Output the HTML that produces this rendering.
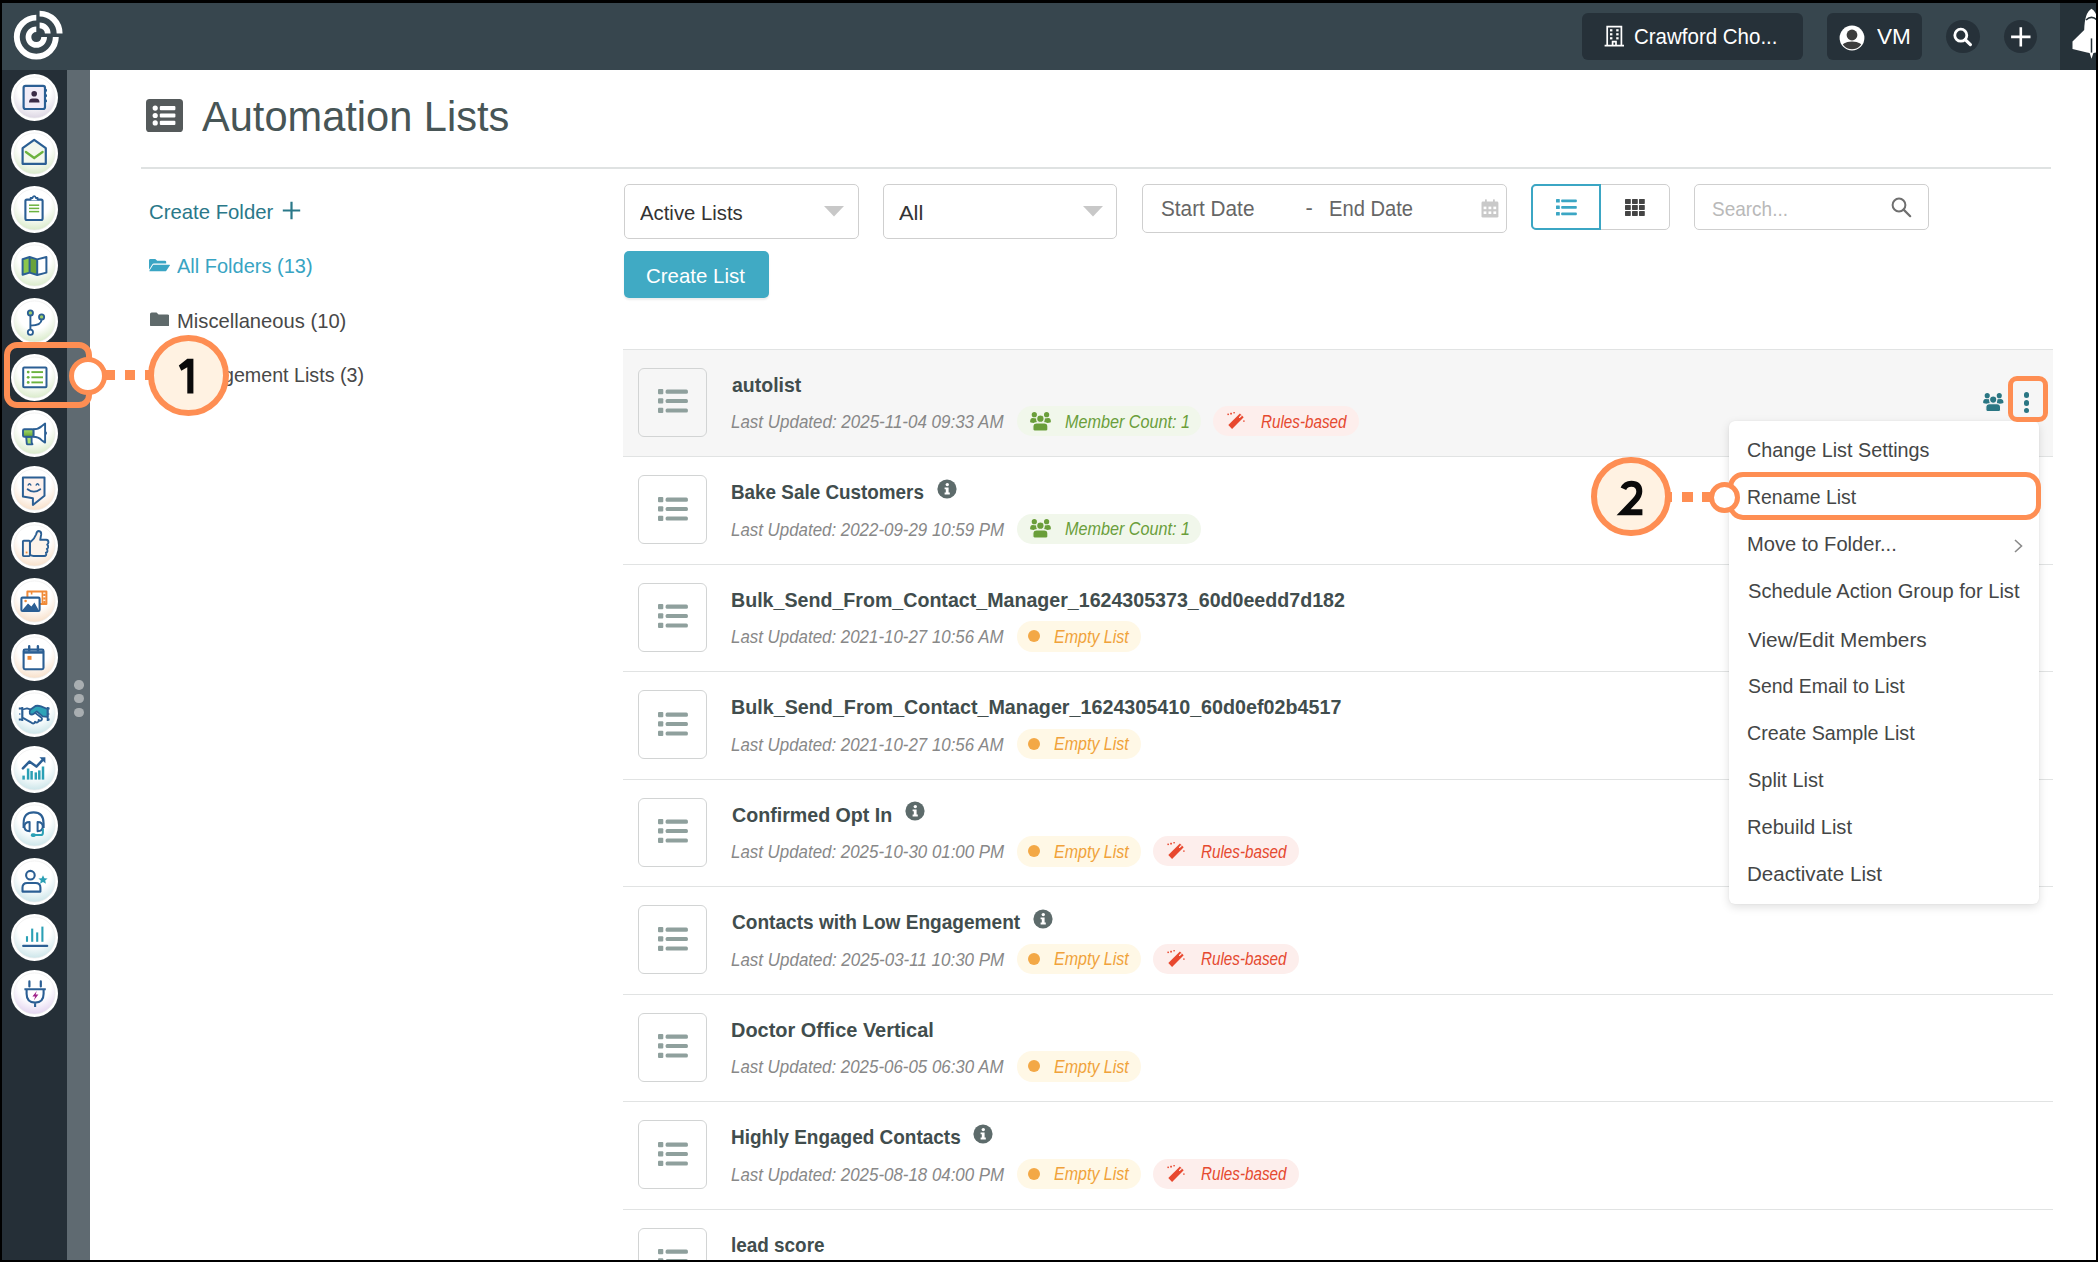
<!DOCTYPE html>
<html><head><meta charset="utf-8"><style>
html,body{margin:0;padding:0;}
body{width:2098px;height:1262px;position:relative;overflow:hidden;background:#fff;font-family:"Liberation Sans",sans-serif;}
.t{position:absolute;white-space:nowrap;transform-origin:0 0;}
#frame{position:absolute;left:0;top:0;width:2098px;height:1262px;box-sizing:border-box;border-style:solid;border-color:#000;border-width:3px 2px 2px 2px;pointer-events:none;}
</style></head><body>
<div style="position:absolute;left:0;top:0;width:2098px;height:70px;background:#37464e"></div>
<div style="position:absolute;left:2060px;top:0;width:38px;height:70px;background:#263239"></div>
<svg style="position:absolute;left:0;top:0" width="80" height="70" viewBox="0 0 80 70">
<g fill="none" stroke="#fff" stroke-width="5.9">
<path d="M 36.3 17.6 A 19.5 19.5 0 1 0 55.8 37.1" />
<path d="M 36.3 29.25 A 7.85 7.85 0 1 0 44.15 37.1" stroke-width="5.7"/>
<path d="M 39.6 13.6 A 20 20 0 0 1 59.6 33.6" />
<path d="M 39.6 25.45 A 8.15 8.15 0 0 1 47.75 33.6" stroke-width="5.7"/>
</g></svg>
<div style="position:absolute;left:1582px;top:12.5px;width:221px;height:47px;background:#263139;border-radius:6px"></div>
<div style="position:absolute;left:1827px;top:12.5px;width:95px;height:47px;background:#263139;border-radius:6px"></div>
<div style="position:absolute;left:1946px;top:19.5px;width:33.5px;height:33.5px;background:#263139;border-radius:50%"></div>
<div style="position:absolute;left:2003.5px;top:19.5px;width:33.5px;height:33.5px;background:#263139;border-radius:50%"></div>
<svg style="position:absolute;left:1604px;top:25px" width="21" height="22" viewBox="0 0 21 22">
<path d="M3.2 20.6 V1.6 H17.4 V20.6 M0.6 20.6 H20 M8.6 20.6 V16.6 H12 V20.6" fill="none" stroke="#fff" stroke-width="1.7"/>
<g fill="#fff"><rect x="6" y="4.2" width="2.4" height="2.2"/><rect x="12.2" y="4.2" width="2.4" height="2.2"/><rect x="6" y="8.2" width="2.4" height="2.2"/><rect x="12.2" y="8.2" width="2.4" height="2.2"/><rect x="6" y="12.2" width="2.4" height="2.2"/><rect x="12.2" y="12.2" width="2.4" height="2.2"/></g></svg>
<svg style="position:absolute;left:1839px;top:25px" width="26" height="26" viewBox="0 0 26 26">
<defs><clipPath id="avc"><circle cx="13" cy="13" r="11.2"/></clipPath></defs>
<circle cx="13" cy="13" r="12.4" fill="#fff"/>
<g clip-path="url(#avc)" fill="#3d3d3d"><circle cx="13" cy="10" r="5.4"/><path d="M1 26 Q2 16.6 13 16.6 Q24 16.6 25 26 Z"/></g></svg>
<svg style="position:absolute;left:1946px;top:19.5px" width="34" height="34" viewBox="0 0 34 34">
<circle cx="14.8" cy="15.2" r="6" fill="none" stroke="#fff" stroke-width="2.8"/>
<path d="M19.2 19.6 L24.4 24.6" stroke="#fff" stroke-width="3.2" stroke-linecap="round"/></svg>
<svg style="position:absolute;left:2003.5px;top:19.5px" width="34" height="34" viewBox="0 0 34 34">
<path d="M16.8 7.2 V26.6 M7.1 16.9 H26.5" stroke="#fff" stroke-width="2.6"/></svg>
<svg style="position:absolute;left:2060px;top:0" width="38" height="70" viewBox="0 0 38 70">
<path d="M31.5 8.7 Q24.6 12.5 24.2 30 L12.5 41.6 V49 L27 52.4 L29.6 53 L31.5 58.7 L33.4 53 L36 52.4 L50.5 49 V41.6 L38.8 30 Q38.4 12.5 31.5 8.7 Z" fill="#fff"/>
<path d="M26 20 Q31.5 14.8 37 20" fill="none" stroke="#263239" stroke-width="1.7"/>
<path d="M31.5 38.4 V52.6" stroke="#263239" stroke-width="1.5"/></svg>
<div style="position:absolute;left:0;top:70px;width:67px;height:1192px;background:#252f37"></div>
<div style="position:absolute;left:67px;top:70px;width:23px;height:1192px;background:#5f6a71"></div>
<div style="position:absolute;left:74px;top:680.3px;width:9.5px;height:9.5px;background:#a9aeb1;border-radius:50%"></div>
<div style="position:absolute;left:74px;top:693.9px;width:9.5px;height:9.5px;background:#a9aeb1;border-radius:50%"></div>
<div style="position:absolute;left:74px;top:707.5px;width:9.5px;height:9.5px;background:#a9aeb1;border-radius:50%"></div>
<svg style="position:absolute;left:11.0px;top:74.0px" width="47" height="47" viewBox="0 0 47 47"><defs><radialGradient id="cg0" cx="50%" cy="30%" r="78%"><stop offset="0" stop-color="#fff"/><stop offset="0.5" stop-color="#fff"/><stop offset="1" stop-color="#d3cbdc"/></radialGradient></defs><circle cx="23.5" cy="23.5" r="23.5" fill="#fff"/><circle cx="23.5" cy="23.5" r="20.6" fill="url(#cg0)" stroke="#ececec" stroke-width="0.7"/><rect x="12.6" y="11.8" width="21.4" height="23.2" rx="2" fill="#f1ecf7" stroke="#2b5f94" stroke-width="2.2"/>
<g fill="#2b5f94"><rect x="34" y="15" width="2" height="2.8" rx="0.8"/><rect x="34" y="20.2" width="2" height="2.8" rx="0.8"/><rect x="34" y="25.4" width="2" height="2.8" rx="0.8"/></g>
<circle cx="23.2" cy="19.8" r="2.8" fill="#3a2c47"/><path d="M18 28.6 Q18 24.4 21.5 24.4 H25 Q28.5 24.4 28.5 28.6 Z" fill="#3a2c47"/></svg>
<svg style="position:absolute;left:11.0px;top:130.0px" width="47" height="47" viewBox="0 0 47 47"><defs><radialGradient id="cg1" cx="50%" cy="30%" r="78%"><stop offset="0" stop-color="#fff"/><stop offset="0.5" stop-color="#fff"/><stop offset="1" stop-color="#d0e6bd"/></radialGradient></defs><circle cx="23.5" cy="23.5" r="23.5" fill="#fff"/><circle cx="23.5" cy="23.5" r="20.6" fill="url(#cg1)" stroke="#ececec" stroke-width="0.7"/><path d="M11.6 33.8 V18.2 L23.2 9.8 L34.8 18.2 V33.8 Z" fill="#f3f8ee" stroke="#2b5f94" stroke-width="2.2" stroke-linejoin="round"/>
<path d="M14.9 22 L23.2 28 L31.6 22" fill="none" stroke="#6cb33f" stroke-width="2.3" stroke-linecap="round"/></svg>
<svg style="position:absolute;left:11.0px;top:186.0px" width="47" height="47" viewBox="0 0 47 47"><defs><radialGradient id="cg2" cx="50%" cy="30%" r="78%"><stop offset="0" stop-color="#fff"/><stop offset="0.5" stop-color="#fff"/><stop offset="1" stop-color="#d0e6bd"/></radialGradient></defs><circle cx="23.5" cy="23.5" r="23.5" fill="#fff"/><circle cx="23.5" cy="23.5" r="20.6" fill="url(#cg2)" stroke="#ececec" stroke-width="0.7"/><rect x="14.4" y="13.6" width="17.2" height="20.4" rx="1.5" fill="#fff" stroke="#2b5f94" stroke-width="2.1"/>
<path d="M19.6 14.2 V12 H21.6 Q21.8 10.2 23.2 10.2 Q24.6 10.2 24.8 12 H26.6 V14.2" fill="#fff" stroke="#2b5f94" stroke-width="1.8" stroke-linejoin="round"/>
<g stroke="#6cb33f" stroke-width="1.5"><path d="M18 19.2 H28.2"/><path d="M18 22.4 H28.2"/><path d="M18 25.6 H28.2"/></g></svg>
<svg style="position:absolute;left:11.0px;top:242.0px" width="47" height="47" viewBox="0 0 47 47"><defs><radialGradient id="cg3" cx="50%" cy="30%" r="78%"><stop offset="0" stop-color="#fff"/><stop offset="0.5" stop-color="#fff"/><stop offset="1" stop-color="#d0e6bd"/></radialGradient></defs><circle cx="23.5" cy="23.5" r="23.5" fill="#fff"/><circle cx="23.5" cy="23.5" r="20.6" fill="url(#cg3)" stroke="#ececec" stroke-width="0.7"/><path d="M11.6 17.2 L18.6 15 V30.6 L11.6 32.8 Z" fill="#8cc64c"/>
<path d="M18.6 15 L26.2 17.4 V33 L18.6 30.6 Z" fill="#6aa23a"/>
<path d="M26.2 17.4 L35.4 15 V30.6 L26.2 33 Z" fill="#fff"/>
<path d="M11.6 17.2 L18.6 15 L26.2 17.4 L35.4 15 V30.6 L26.2 33 L18.6 30.6 L11.6 32.8 Z M18.6 15 V30.6 M26.2 17.4 V33" fill="none" stroke="#2b5f94" stroke-width="2" stroke-linejoin="round"/></svg>
<svg style="position:absolute;left:11.0px;top:298.0px" width="47" height="47" viewBox="0 0 47 47"><defs><radialGradient id="cg4" cx="50%" cy="30%" r="78%"><stop offset="0" stop-color="#fff"/><stop offset="0.5" stop-color="#fff"/><stop offset="1" stop-color="#d0e6bd"/></radialGradient></defs><circle cx="23.5" cy="23.5" r="23.5" fill="#fff"/><circle cx="23.5" cy="23.5" r="20.6" fill="url(#cg4)" stroke="#ececec" stroke-width="0.7"/><path d="M19.4 17.4 V31.8 M30.6 21.4 Q30.6 27.2 19.4 27.6" fill="none" stroke="#2b5f94" stroke-width="1.9"/>
<circle cx="19.4" cy="14.9" r="2.6" fill="#9ccc6a" stroke="#2b5f94" stroke-width="1.8"/>
<circle cx="30.6" cy="18.9" r="2.6" fill="#9ccc6a" stroke="#2b5f94" stroke-width="1.8"/>
<circle cx="19.4" cy="34.3" r="2.6" fill="#fff" stroke="#2b5f94" stroke-width="1.8"/></svg>
<svg style="position:absolute;left:11.0px;top:354.0px" width="47" height="47" viewBox="0 0 47 47"><defs><radialGradient id="cg5" cx="50%" cy="30%" r="78%"><stop offset="0" stop-color="#fff"/><stop offset="0.5" stop-color="#fff"/><stop offset="1" stop-color="#d0e6bd"/></radialGradient></defs><circle cx="23.5" cy="23.5" r="23.5" fill="#fff"/><circle cx="23.5" cy="23.5" r="20.6" fill="url(#cg5)" stroke="#ececec" stroke-width="0.7"/><rect x="12.2" y="13.6" width="23.3" height="19.7" rx="1" fill="#fff" stroke="#2b5f94" stroke-width="2"/>
<g fill="#6cb33f"><circle cx="17.2" cy="18.1" r="1.4"/><circle cx="17.2" cy="23.3" r="1.4"/><circle cx="17.2" cy="28.4" r="1.4"/></g>
<g stroke="#6cb33f" stroke-width="1.9"><path d="M20.4 18.1 H32"/><path d="M20.4 23.3 H32"/><path d="M20.4 28.4 H32"/></g></svg>
<svg style="position:absolute;left:11.0px;top:410.0px" width="47" height="47" viewBox="0 0 47 47"><defs><radialGradient id="cg6" cx="50%" cy="30%" r="78%"><stop offset="0" stop-color="#fff"/><stop offset="0.5" stop-color="#fff"/><stop offset="1" stop-color="#d0e6bd"/></radialGradient></defs><circle cx="23.5" cy="23.5" r="23.5" fill="#fff"/><circle cx="23.5" cy="23.5" r="20.6" fill="url(#cg6)" stroke="#ececec" stroke-width="0.7"/><defs><linearGradient id="megag" x1="0" y1="0" x2="0" y2="1"><stop offset="0" stop-color="#a9df6c"/><stop offset="1" stop-color="#64a032"/></linearGradient></defs>
<path d="M15.2 26.8 L15.8 33.6 Q15.9 34.4 16.7 34.4 H21.2 Q21.8 34.4 21.3 33.7 L20.6 32.6 V26.8 Z" fill="#a8e070" stroke="#2b5f94" stroke-width="1.9" stroke-linejoin="round"/>
<path d="M22.4 19.2 Q27.4 19.2 30.6 16.2 L34.1 13.6 V32.6 L30.6 30.2 Q27.4 26.8 22.4 26.8 Z" fill="#fff" stroke="#2b5f94" stroke-width="1.9" stroke-linejoin="round"/>
<rect x="12" y="19.2" width="10.4" height="7.6" rx="1.4" fill="url(#megag)" stroke="#2b5f94" stroke-width="1.9"/>
<path d="M34.6 21.6 Q36.2 23.1 34.6 24.6 Z" fill="#2b5f94" stroke="#2b5f94" stroke-width="1.2"/></svg>
<svg style="position:absolute;left:11.0px;top:466.0px" width="47" height="47" viewBox="0 0 47 47"><defs><radialGradient id="cg7" cx="50%" cy="30%" r="78%"><stop offset="0" stop-color="#fff"/><stop offset="0.5" stop-color="#fff"/><stop offset="1" stop-color="#f6d8bc"/></radialGradient></defs><circle cx="23.5" cy="23.5" r="23.5" fill="#fff"/><circle cx="23.5" cy="23.5" r="20.6" fill="url(#cg7)" stroke="#ececec" stroke-width="0.7"/><path d="M11.9 11.6 H33.5 V29.8 L21.9 39 V32.3 L11.9 30.6 Z" fill="#fdf1ec" stroke="#2b5f94" stroke-width="2" stroke-linejoin="round"/>
<path d="M17.2 19 Q18.5 16.6 19.8 19 M25.2 19 Q26.5 16.6 27.8 19" fill="none" stroke="#2b5f94" stroke-width="1.5" stroke-linecap="round"/>
<path d="M16.6 23.2 Q22.9 28 29.3 23.2" fill="none" stroke="#2b5f94" stroke-width="1.8" stroke-linecap="round"/></svg>
<svg style="position:absolute;left:11.0px;top:522.0px" width="47" height="47" viewBox="0 0 47 47"><defs><radialGradient id="cg8" cx="50%" cy="30%" r="78%"><stop offset="0" stop-color="#fff"/><stop offset="0.5" stop-color="#fff"/><stop offset="1" stop-color="#f6d8bc"/></radialGradient></defs><circle cx="23.5" cy="23.5" r="23.5" fill="#fff"/><circle cx="23.5" cy="23.5" r="20.6" fill="url(#cg8)" stroke="#ececec" stroke-width="0.7"/><path d="M19 20.5 Q23.5 17 25.2 12.2 Q25.8 9 27.8 9 Q30.4 9.2 30.2 12.4 L29.2 17.8 H35.2 Q37.6 18 37.4 20.6 Q37.2 22 36.2 22.6 Q37.4 23.4 37.1 25.2 Q36.8 26.6 35.8 26.9 Q36.8 27.8 36.4 29.4 Q36 30.6 34.9 30.8 Q35.6 31.8 35.1 33 Q34.6 34 33.2 34 H22.6 Q20.6 34 19 32.8 Z" fill="#fdf3ea" stroke="#2b5f94" stroke-width="1.9" stroke-linejoin="round"/>
<rect x="11.9" y="18.8" width="7" height="15.3" rx="0.8" fill="#fdf3ea" stroke="#2b5f94" stroke-width="1.9"/>
<rect x="14.7" y="29.6" width="1.8" height="1.8" fill="#f08a38"/></svg>
<svg style="position:absolute;left:11.0px;top:578.0px" width="47" height="47" viewBox="0 0 47 47"><defs><radialGradient id="cg9" cx="50%" cy="30%" r="78%"><stop offset="0" stop-color="#fff"/><stop offset="0.5" stop-color="#fff"/><stop offset="1" stop-color="#f6d8bc"/></radialGradient></defs><circle cx="23.5" cy="23.5" r="23.5" fill="#fff"/><circle cx="23.5" cy="23.5" r="20.6" fill="url(#cg9)" stroke="#ececec" stroke-width="0.7"/><path d="M16.4 19 V13.6 H35.4 V26 H29" fill="#fff" stroke="#f08a38" stroke-width="2" stroke-linejoin="round"/>
<path d="M20.6 13.6 V16.4 M31.4 13.6 V26" stroke="#f08a38" stroke-width="1.6"/>
<g fill="#f08a38"><rect x="32.2" y="15.8" width="2.4" height="2.2"/><rect x="32.2" y="19.4" width="2.4" height="2.2"/><rect x="32.2" y="22.8" width="2.4" height="2.2"/></g>
<rect x="10.4" y="19.6" width="18.2" height="13.4" rx="1.2" fill="#fff" stroke="#2b5f94" stroke-width="2.1"/>
<path d="M11.4 32 L17 25.4 L20.4 28.6 L23.4 24.4 L27.6 32 Z" fill="#2b5f94"/>
<circle cx="14.6" cy="23" r="1.3" fill="#f08a38"/></svg>
<svg style="position:absolute;left:11.0px;top:634.0px" width="47" height="47" viewBox="0 0 47 47"><defs><radialGradient id="cg10" cx="50%" cy="30%" r="78%"><stop offset="0" stop-color="#fff"/><stop offset="0.5" stop-color="#fff"/><stop offset="1" stop-color="#f6d8bc"/></radialGradient></defs><circle cx="23.5" cy="23.5" r="23.5" fill="#fff"/><circle cx="23.5" cy="23.5" r="20.6" fill="url(#cg10)" stroke="#ececec" stroke-width="0.7"/><rect x="12.6" y="15.6" width="19.9" height="19.6" rx="1.4" fill="#fff" stroke="#2b5f94" stroke-width="2.1"/>
<path d="M12.6 18.4 H32.5" stroke="#2b5f94" stroke-width="2.6"/>
<path d="M18.2 12.2 V16.4 M26.9 12.2 V16.4" stroke="#2b5f94" stroke-width="2.4" stroke-linecap="round"/>
<rect x="16.5" y="21.9" width="4" height="3.9" fill="#f08a38"/></svg>
<svg style="position:absolute;left:11.0px;top:690.0px" width="47" height="47" viewBox="0 0 47 47"><defs><radialGradient id="cg11" cx="50%" cy="30%" r="78%"><stop offset="0" stop-color="#fff"/><stop offset="0.5" stop-color="#fff"/><stop offset="1" stop-color="#bfdfe4"/></radialGradient></defs><circle cx="23.5" cy="23.5" r="23.5" fill="#fff"/><circle cx="23.5" cy="23.5" r="20.6" fill="url(#cg11)" stroke="#ececec" stroke-width="0.7"/><path d="M7.8 18.5 H11.3 M7.8 29.5 H11.3 M11.3 17 V31 M38.6 18.5 H36.7 M38.6 29.5 H36.7 M36.7 17 V31" stroke="#2b5f94" stroke-width="1.9" fill="none"/>
<circle cx="8.8" cy="24" r="0.8" fill="#2b5f94"/><circle cx="37.8" cy="24" r="0.8" fill="#2b5f94"/>
<path d="M11.5 19.5 L16 18.3 L20 19.6 L30.5 27.8 Q31.6 29.4 30.2 30.4 Q28.8 31.2 27.6 30 Q28 31.8 26.4 32.4 Q25 32.8 24 31.6 Q23.8 33.4 22.2 33.5 Q21 33.5 20 32.4 L11.5 27.6 Z" fill="#fff" stroke="#2b5f94" stroke-width="1.8" stroke-linejoin="round"/>
<path d="M36.5 19 L30 16.4 Q27 15.4 24.5 16 L19.6 19.6 Q17.8 21.6 18.8 23.6 Q20.4 25.4 22.8 23.8 L25.8 21.4 L31.6 26.4 L36.5 26.8 Z" fill="#2ea3b8" stroke="#2b5f94" stroke-width="1.8" stroke-linejoin="round"/></svg>
<svg style="position:absolute;left:11.0px;top:746.0px" width="47" height="47" viewBox="0 0 47 47"><defs><radialGradient id="cg12" cx="50%" cy="30%" r="78%"><stop offset="0" stop-color="#fff"/><stop offset="0.5" stop-color="#fff"/><stop offset="1" stop-color="#bfdfe4"/></radialGradient></defs><circle cx="23.5" cy="23.5" r="23.5" fill="#fff"/><circle cx="23.5" cy="23.5" r="20.6" fill="url(#cg12)" stroke="#ececec" stroke-width="0.7"/><g stroke="#2ba0b5" stroke-width="2.5"><path d="M12.6 33.6 V29.6"/><path d="M17.1 33.6 V22.5"/><path d="M20.6 33.6 V25"/><path d="M24.8 33.6 V26.4"/><path d="M28.3 33.6 V24.4"/><path d="M32 33.6 V20.5"/></g>
<path d="M11.9 22.4 L18.4 15.6 L25.4 20.6 L32.2 13.4" fill="none" stroke="#2b5f94" stroke-width="2.5" stroke-linejoin="round" stroke-linecap="round"/>
<path d="M28.4 11.2 H34.4 V17.2 Z" fill="#2b5f94"/></svg>
<svg style="position:absolute;left:11.0px;top:802.0px" width="47" height="47" viewBox="0 0 47 47"><defs><radialGradient id="cg13" cx="50%" cy="30%" r="78%"><stop offset="0" stop-color="#fff"/><stop offset="0.5" stop-color="#fff"/><stop offset="1" stop-color="#bfdfe4"/></radialGradient></defs><circle cx="23.5" cy="23.5" r="23.5" fill="#fff"/><circle cx="23.5" cy="23.5" r="20.6" fill="url(#cg13)" stroke="#ececec" stroke-width="0.7"/><path d="M12.6 26 V21.4 Q12.6 10.4 22.6 10.4 Q32.6 10.4 32.6 21.4 V26" fill="none" stroke="#2b5f94" stroke-width="2.1"/>
<path d="M18.6 20 Q13.4 20 13.4 24.6 Q13.4 29.2 18.6 29.2 Z" fill="#fff" stroke="#2b5f94" stroke-width="2" stroke-linejoin="round"/>
<path d="M26.6 20 Q31.8 20 31.8 24.6 Q31.8 29.2 26.6 29.2 Z" fill="#fff" stroke="#2b5f94" stroke-width="2" stroke-linejoin="round"/>
<path d="M31.9 26.8 V31 Q31.9 33.1 29.8 33.1 H23" fill="none" stroke="#2ba0b5" stroke-width="2"/>
<rect x="19.8" y="31.2" width="5" height="3.8" rx="1.8" fill="#2ba0b5"/></svg>
<svg style="position:absolute;left:11.0px;top:858.0px" width="47" height="47" viewBox="0 0 47 47"><defs><radialGradient id="cg14" cx="50%" cy="30%" r="78%"><stop offset="0" stop-color="#fff"/><stop offset="0.5" stop-color="#fff"/><stop offset="1" stop-color="#bfdfe4"/></radialGradient></defs><circle cx="23.5" cy="23.5" r="23.5" fill="#fff"/><circle cx="23.5" cy="23.5" r="20.6" fill="url(#cg14)" stroke="#ececec" stroke-width="0.7"/><circle cx="19.4" cy="17.2" r="4.3" fill="#fff" stroke="#2b5f94" stroke-width="2.1"/>
<path d="M11.5 33.6 V29.6 Q11.5 25 16.2 25 H24.6 Q29.4 25 29.4 29.6 V33.6 Z" fill="#fff" stroke="#2b5f94" stroke-width="2.1" stroke-linejoin="round"/>
<path d="M32 17.2 L33.4 20.2 L36.6 20.5 L34.2 22.6 L34.9 25.8 L32 24.1 L29.1 25.8 L29.8 22.6 L27.4 20.5 L30.6 20.2 Z" fill="#2ba0b5"/></svg>
<svg style="position:absolute;left:11.0px;top:914.0px" width="47" height="47" viewBox="0 0 47 47"><defs><radialGradient id="cg15" cx="50%" cy="30%" r="78%"><stop offset="0" stop-color="#fff"/><stop offset="0.5" stop-color="#fff"/><stop offset="1" stop-color="#bfdfe4"/></radialGradient></defs><circle cx="23.5" cy="23.5" r="23.5" fill="#fff"/><circle cx="23.5" cy="23.5" r="20.6" fill="url(#cg15)" stroke="#ececec" stroke-width="0.7"/><g stroke="#2ba0b5" stroke-width="2.1"><path d="M16 27.8 V22.2"/><path d="M21.2 27.8 V14.6"/><path d="M26.2 27.8 V18.4"/><path d="M31.4 27.8 V12.6"/></g>
<path d="M12.2 31.9 H36.2" stroke="#2b5f94" stroke-width="2.2" stroke-linecap="round"/></svg>
<svg style="position:absolute;left:11.0px;top:970.0px" width="47" height="47" viewBox="0 0 47 47"><defs><radialGradient id="cg16" cx="50%" cy="30%" r="78%"><stop offset="0" stop-color="#fff"/><stop offset="0.5" stop-color="#fff"/><stop offset="1" stop-color="#dccaec"/></radialGradient></defs><circle cx="23.5" cy="23.5" r="23.5" fill="#fff"/><circle cx="23.5" cy="23.5" r="20.6" fill="url(#cg16)" stroke="#ececec" stroke-width="0.7"/><path d="M18.4 11.4 V16.4 M29.8 11.4 V16.4" stroke="#2b5f94" stroke-width="2.2" stroke-linecap="round"/>
<path d="M13.4 19.2 H34.8 M15.6 19.2 V23.8 Q15.6 32.6 24.1 32.6 Q32.6 32.6 32.6 23.8 V19.2 M24.1 32.6 V37" fill="none" stroke="#2b5f94" stroke-width="2.1"/>
<path d="M25.8 21 L21.4 26.4 H24.2 L22.8 30.4 L27.4 24.6 H24.6 Z" fill="#a0228a"/></svg>
<svg style="position:absolute;left:145.5px;top:98.6px" width="37" height="33" viewBox="0 0 37 33">
<rect x="0" y="0" width="37" height="33" rx="3.6" fill="#555a5b"/>
<g fill="#fff"><circle cx="9.2" cy="9.1" r="2.6"/><circle cx="9.2" cy="16.5" r="2.6"/><circle cx="9.2" cy="23.9" r="2.6"/>
<rect x="13.8" y="7" width="15.6" height="4.2" rx="1"/><rect x="13.8" y="14.4" width="15.6" height="4.2" rx="1"/><rect x="13.8" y="21.8" width="15.6" height="4.2" rx="1"/></g></svg>
<div style="position:absolute;left:140.7px;top:167px;width:1910px;height:1.5px;background:#dfe2e2"></div>
<svg style="position:absolute;left:282px;top:201px" width="19" height="19" viewBox="0 0 19 19"><path d="M9.5 0.8 V18.2 M0.8 9.5 H18.2" stroke="#2a7889" stroke-width="2.2"/></svg>
<svg style="position:absolute;left:149.4px;top:258.2px" width="21" height="13.5" viewBox="0 0 22 17.4" preserveAspectRatio="none">
<path d="M0 3 Q0 1.4 1.6 1.4 H6.6 L8.6 3.4 H16.6 Q18 3.4 18 4.8 V7.2 H5.2 Q4 7.2 3.4 8.4 L0 15 Z" fill="#3aa5c4"/>
<path d="M4.4 8.8 H21.4 Q22.4 8.8 21.8 9.8 L18 16.6 Q17.6 17.2 16.8 17.2 H0.8 Q0 17.2 0.4 16.4 Z" fill="#3aa5c4"/></svg>
<svg style="position:absolute;left:149.9px;top:312px" width="19.2" height="14.3" viewBox="0 0 20.6 16.6" preserveAspectRatio="none">
<path d="M0 2.4 Q0 0.6 1.8 0.6 H7 L9.2 2.8 H18.8 Q20.6 2.8 20.6 4.6 V15 Q20.6 16.6 18.8 16.6 H1.8 Q0 16.6 0 15 Z" fill="#5f6a6b"/></svg>
<div style="position:absolute;left:623.6px;top:183.6px;width:235px;height:55px;box-sizing:border-box;border:1.5px solid #cfcfcf;border-radius:5px;background:#fff"></div>
<div style="position:absolute;left:883.4px;top:183.6px;width:234px;height:55px;box-sizing:border-box;border:1.5px solid #cfcfcf;border-radius:5px;background:#fff"></div>
<svg style="position:absolute;left:824px;top:206px" width="20" height="11"><path d="M0 0 H20 L10 10.5 Z" fill="#c8c8c8"/></svg>
<svg style="position:absolute;left:1083px;top:206px" width="20" height="11"><path d="M0 0 H20 L10 10.5 Z" fill="#c8c8c8"/></svg>
<div style="position:absolute;left:623.6px;top:251px;width:145.4px;height:46.6px;background:#40aac4;border-radius:5px;box-shadow:0 2px 2px rgba(0,0,0,0.08)"></div>
<div style="position:absolute;left:1142.4px;top:183.5px;width:364.5px;height:49px;box-sizing:border-box;border:1.5px solid #cfcfcf;border-radius:5px;background:#fff"></div>
<div style="position:absolute;left:1530.9px;top:183.5px;width:139px;height:46.5px;box-sizing:border-box;border:1.5px solid #cfcfcf;border-radius:5px;background:#fff"></div>
<div style="position:absolute;left:1530.9px;top:183.5px;width:70.5px;height:46.5px;box-sizing:border-box;border:2px solid #3ba6c4;border-radius:5px 0 0 5px"></div>
<svg style="position:absolute;left:1480.5px;top:198.5px" width="18" height="19" viewBox="0 0 18 19">
<path d="M0.5 4 Q0.5 2.6 1.9 2.6 H16 Q17.4 2.6 17.4 4 V17.2 Q17.4 18.6 16 18.6 H1.9 Q0.5 18.6 0.5 17.2 Z" fill="#c9c9c9"/>
<rect x="4" y="0.4" width="1.8" height="3.6" fill="#c9c9c9"/><rect x="12" y="0.4" width="1.8" height="3.6" fill="#c9c9c9"/>
<g fill="#fff"><rect x="2.6" y="7.6" width="2.8" height="2.6"/><rect x="7.5" y="7.6" width="2.8" height="2.6"/><rect x="12.4" y="7.6" width="2.8" height="2.6"/>
<rect x="2.6" y="12.4" width="2.8" height="2.6"/><rect x="7.5" y="12.4" width="2.8" height="2.6"/><rect x="12.4" y="12.4" width="2.8" height="2.6"/></g></svg>
<svg style="position:absolute;left:1555.5px;top:199px" width="21" height="17" viewBox="0 0 21 17">
<g fill="#3ba6c4"><rect x="0" y="0" width="3.8" height="3.6" rx="0.6"/><rect x="0" y="6.5" width="3.8" height="3.6" rx="0.6"/><rect x="0" y="13" width="3.8" height="3.6" rx="0.6"/>
<rect x="5.2" y="0.4" width="15.6" height="2.8" rx="0.8"/><rect x="5.2" y="6.9" width="15.6" height="2.8" rx="0.8"/><rect x="5.2" y="13.4" width="15.6" height="2.8" rx="0.8"/></g></svg>
<svg style="position:absolute;left:1625px;top:199px" width="20" height="17" viewBox="0 0 20 17">
<g fill="#444"><rect x="0" y="0" width="5.8" height="4.9" rx="0.6"/><rect x="7" y="0" width="5.8" height="4.9" rx="0.6"/><rect x="14" y="0" width="5.8" height="4.9" rx="0.6"/>
<rect x="0" y="6" width="5.8" height="4.9" rx="0.6"/><rect x="7" y="6" width="5.8" height="4.9" rx="0.6"/><rect x="14" y="6" width="5.8" height="4.9" rx="0.6"/>
<rect x="0" y="12" width="5.8" height="4.9" rx="0.6"/><rect x="7" y="12" width="5.8" height="4.9" rx="0.6"/><rect x="14" y="12" width="5.8" height="4.9" rx="0.6"/></g></svg>
<div style="position:absolute;left:1693.8px;top:183.5px;width:235.2px;height:46.5px;box-sizing:border-box;border:1.5px solid #cfcfcf;border-radius:5px;background:#fff"></div>
<svg style="position:absolute;left:1891px;top:197px" width="21" height="21" viewBox="0 0 21 21">
<circle cx="8" cy="8" r="6.4" fill="none" stroke="#6f6f6f" stroke-width="2"/><path d="M12.6 12.6 L19.2 19.2" stroke="#6f6f6f" stroke-width="2.2" stroke-linecap="round"/></svg>
<div style="position:absolute;left:623.4px;top:349px;width:1429.4px;height:107.5px;background:#f6f6f6"></div>
<div style="position:absolute;left:623px;top:348.6px;width:1430px;height:1.2px;background:#e1e3e3"></div>
<div style="position:absolute;left:638.3px;top:367.5px;width:69px;height:69px;box-sizing:border-box;border:1.8px solid #d2d4d4;border-radius:6px"></div>
<svg style="position:absolute;left:657.8px;top:389.3px" width="30" height="25" viewBox="0 0 30 25"><g fill="#8fa09d"><rect x="0" y="0" width="5.3" height="5.3" rx="1"/><rect x="0" y="9.3" width="5.3" height="5.3" rx="1"/><rect x="0" y="18.8" width="5.3" height="5.3" rx="1"/><rect x="7.6" y="0.6" width="22.3" height="4.1" rx="1.5"/><rect x="7.6" y="9.9" width="22.3" height="4.1" rx="1.5"/><rect x="7.6" y="19.4" width="22.3" height="4.1" rx="1.5"/></g></svg>
<div style="position:absolute;left:1017.0px;top:406.0px;width:184px;height:30.3px;border-radius:15.2px;background:#f1f7eb"></div>
<svg style="position:absolute;left:1030.0px;top:411.6px" width="21.0" height="20.0" viewBox="0 0 21 20"><g fill="#6a9e3a"><circle cx="4.3" cy="2.7" r="2.6"/><circle cx="16.6" cy="2.7" r="2.6"/><path d="M0.2 10.2 Q-0.2 6.4 2.6 6 L6.4 6.4 L6.8 10.6 Q3 11.4 0.2 10.2 Z"/><path d="M20.8 10.2 Q21.2 6.4 18.4 6 L14.6 6.4 L14.2 10.6 Q18 11.4 20.8 10.2 Z"/><path d="M2.9 17.2 V14.4 Q2.9 10.9 6.6 10.9 H14.2 Q17.9 10.9 17.9 14.4 V17.2 Q17.9 19 16.1 19 H4.7 Q2.9 19 2.9 17.2 Z" stroke="#f1f7eb" stroke-width="1.1"/><circle cx="10.4" cy="6.7" r="3.7" stroke="#f1f7eb" stroke-width="1.1"/></g></svg>
<div style="position:absolute;left:1213.0px;top:406.0px;width:145.8px;height:30.3px;border-radius:15.2px;background:#fdeeec"></div>
<svg style="position:absolute;left:1227.0px;top:412.2px" width="19" height="19" viewBox="0 0 19 19"><g fill="#e8482f"><path d="M1.3 13.1 L12.9 1.5 L16.7 5.3 L5.1 16.9 Z"/><rect x="0.4" y="1.6" width="1.5" height="1.5"/><rect x="3.2" y="0.8" width="1.7" height="1.7"/><rect x="6.4" y="0" width="1.4" height="1.4"/><rect x="16.2" y="8.4" width="1.4" height="1.4"/></g><path d="M12.6 5.4 L14.2 3.8" stroke="#fdeeec" stroke-width="1.3" stroke-linecap="round"/></svg>
<div style="position:absolute;left:623px;top:456.1px;width:1430px;height:1.2px;background:#e1e3e3"></div>
<div style="position:absolute;left:638.3px;top:475.0px;width:69px;height:69px;box-sizing:border-box;border:1.8px solid #d2d4d4;border-radius:6px"></div>
<svg style="position:absolute;left:657.8px;top:496.8px" width="30" height="25" viewBox="0 0 30 25"><g fill="#8fa09d"><rect x="0" y="0" width="5.3" height="5.3" rx="1"/><rect x="0" y="9.3" width="5.3" height="5.3" rx="1"/><rect x="0" y="18.8" width="5.3" height="5.3" rx="1"/><rect x="7.6" y="0.6" width="22.3" height="4.1" rx="1.5"/><rect x="7.6" y="9.9" width="22.3" height="4.1" rx="1.5"/><rect x="7.6" y="19.4" width="22.3" height="4.1" rx="1.5"/></g></svg>
<svg style="position:absolute;left:936.6px;top:478.5px" width="20" height="20" viewBox="0 0 20 20"><circle cx="10" cy="10" r="9.6" fill="#5d6b6b"/><g fill="#fff"><circle cx="10.3" cy="5.6" r="1.7"/><path d="M7.6 8.4 H11.6 V13.6 H12.8 V15.4 H7.6 V13.6 H8.8 V10.2 H7.6 Z"/></g></svg>
<div style="position:absolute;left:1017.0px;top:513.5px;width:184px;height:30.3px;border-radius:15.2px;background:#f1f7eb"></div>
<svg style="position:absolute;left:1030.0px;top:519.1px" width="21.0" height="20.0" viewBox="0 0 21 20"><g fill="#6a9e3a"><circle cx="4.3" cy="2.7" r="2.6"/><circle cx="16.6" cy="2.7" r="2.6"/><path d="M0.2 10.2 Q-0.2 6.4 2.6 6 L6.4 6.4 L6.8 10.6 Q3 11.4 0.2 10.2 Z"/><path d="M20.8 10.2 Q21.2 6.4 18.4 6 L14.6 6.4 L14.2 10.6 Q18 11.4 20.8 10.2 Z"/><path d="M2.9 17.2 V14.4 Q2.9 10.9 6.6 10.9 H14.2 Q17.9 10.9 17.9 14.4 V17.2 Q17.9 19 16.1 19 H4.7 Q2.9 19 2.9 17.2 Z" stroke="#f1f7eb" stroke-width="1.1"/><circle cx="10.4" cy="6.7" r="3.7" stroke="#f1f7eb" stroke-width="1.1"/></g></svg>
<div style="position:absolute;left:623px;top:563.6px;width:1430px;height:1.2px;background:#e1e3e3"></div>
<div style="position:absolute;left:638.3px;top:582.5px;width:69px;height:69px;box-sizing:border-box;border:1.8px solid #d2d4d4;border-radius:6px"></div>
<svg style="position:absolute;left:657.8px;top:604.3px" width="30" height="25" viewBox="0 0 30 25"><g fill="#8fa09d"><rect x="0" y="0" width="5.3" height="5.3" rx="1"/><rect x="0" y="9.3" width="5.3" height="5.3" rx="1"/><rect x="0" y="18.8" width="5.3" height="5.3" rx="1"/><rect x="7.6" y="0.6" width="22.3" height="4.1" rx="1.5"/><rect x="7.6" y="9.9" width="22.3" height="4.1" rx="1.5"/><rect x="7.6" y="19.4" width="22.3" height="4.1" rx="1.5"/></g></svg>
<div style="position:absolute;left:1016.8px;top:621.0px;width:124.5px;height:30.6px;border-radius:15.3px;background:#fff8e6"></div>
<div style="position:absolute;left:1027.7px;top:630.2px;width:12px;height:12px;border-radius:50%;background:#f3a846"></div>
<div style="position:absolute;left:623px;top:671.1px;width:1430px;height:1.2px;background:#e1e3e3"></div>
<div style="position:absolute;left:638.3px;top:690.0px;width:69px;height:69px;box-sizing:border-box;border:1.8px solid #d2d4d4;border-radius:6px"></div>
<svg style="position:absolute;left:657.8px;top:711.8px" width="30" height="25" viewBox="0 0 30 25"><g fill="#8fa09d"><rect x="0" y="0" width="5.3" height="5.3" rx="1"/><rect x="0" y="9.3" width="5.3" height="5.3" rx="1"/><rect x="0" y="18.8" width="5.3" height="5.3" rx="1"/><rect x="7.6" y="0.6" width="22.3" height="4.1" rx="1.5"/><rect x="7.6" y="9.9" width="22.3" height="4.1" rx="1.5"/><rect x="7.6" y="19.4" width="22.3" height="4.1" rx="1.5"/></g></svg>
<div style="position:absolute;left:1016.8px;top:728.5px;width:124.5px;height:30.6px;border-radius:15.3px;background:#fff8e6"></div>
<div style="position:absolute;left:1027.7px;top:737.7px;width:12px;height:12px;border-radius:50%;background:#f3a846"></div>
<div style="position:absolute;left:623px;top:778.6px;width:1430px;height:1.2px;background:#e1e3e3"></div>
<div style="position:absolute;left:638.3px;top:797.5px;width:69px;height:69px;box-sizing:border-box;border:1.8px solid #d2d4d4;border-radius:6px"></div>
<svg style="position:absolute;left:657.8px;top:819.3px" width="30" height="25" viewBox="0 0 30 25"><g fill="#8fa09d"><rect x="0" y="0" width="5.3" height="5.3" rx="1"/><rect x="0" y="9.3" width="5.3" height="5.3" rx="1"/><rect x="0" y="18.8" width="5.3" height="5.3" rx="1"/><rect x="7.6" y="0.6" width="22.3" height="4.1" rx="1.5"/><rect x="7.6" y="9.9" width="22.3" height="4.1" rx="1.5"/><rect x="7.6" y="19.4" width="22.3" height="4.1" rx="1.5"/></g></svg>
<svg style="position:absolute;left:904.7px;top:801.0px" width="20" height="20" viewBox="0 0 20 20"><circle cx="10" cy="10" r="9.6" fill="#5d6b6b"/><g fill="#fff"><circle cx="10.3" cy="5.6" r="1.7"/><path d="M7.6 8.4 H11.6 V13.6 H12.8 V15.4 H7.6 V13.6 H8.8 V10.2 H7.6 Z"/></g></svg>
<div style="position:absolute;left:1016.8px;top:836.0px;width:124.5px;height:30.6px;border-radius:15.3px;background:#fff8e6"></div>
<div style="position:absolute;left:1027.7px;top:845.2px;width:12px;height:12px;border-radius:50%;background:#f3a846"></div>
<div style="position:absolute;left:1153.3px;top:836.0px;width:145.8px;height:30.3px;border-radius:15.2px;background:#fdeeec"></div>
<svg style="position:absolute;left:1167.3px;top:842.2px" width="19" height="19" viewBox="0 0 19 19"><g fill="#e8482f"><path d="M1.3 13.1 L12.9 1.5 L16.7 5.3 L5.1 16.9 Z"/><rect x="0.4" y="1.6" width="1.5" height="1.5"/><rect x="3.2" y="0.8" width="1.7" height="1.7"/><rect x="6.4" y="0" width="1.4" height="1.4"/><rect x="16.2" y="8.4" width="1.4" height="1.4"/></g><path d="M12.6 5.4 L14.2 3.8" stroke="#fdeeec" stroke-width="1.3" stroke-linecap="round"/></svg>
<div style="position:absolute;left:623px;top:886.1px;width:1430px;height:1.2px;background:#e1e3e3"></div>
<div style="position:absolute;left:638.3px;top:905.0px;width:69px;height:69px;box-sizing:border-box;border:1.8px solid #d2d4d4;border-radius:6px"></div>
<svg style="position:absolute;left:657.8px;top:926.8px" width="30" height="25" viewBox="0 0 30 25"><g fill="#8fa09d"><rect x="0" y="0" width="5.3" height="5.3" rx="1"/><rect x="0" y="9.3" width="5.3" height="5.3" rx="1"/><rect x="0" y="18.8" width="5.3" height="5.3" rx="1"/><rect x="7.6" y="0.6" width="22.3" height="4.1" rx="1.5"/><rect x="7.6" y="9.9" width="22.3" height="4.1" rx="1.5"/><rect x="7.6" y="19.4" width="22.3" height="4.1" rx="1.5"/></g></svg>
<svg style="position:absolute;left:1033.4px;top:908.5px" width="20" height="20" viewBox="0 0 20 20"><circle cx="10" cy="10" r="9.6" fill="#5d6b6b"/><g fill="#fff"><circle cx="10.3" cy="5.6" r="1.7"/><path d="M7.6 8.4 H11.6 V13.6 H12.8 V15.4 H7.6 V13.6 H8.8 V10.2 H7.6 Z"/></g></svg>
<div style="position:absolute;left:1016.8px;top:943.5px;width:124.5px;height:30.6px;border-radius:15.3px;background:#fff8e6"></div>
<div style="position:absolute;left:1027.7px;top:952.7px;width:12px;height:12px;border-radius:50%;background:#f3a846"></div>
<div style="position:absolute;left:1153.3px;top:943.5px;width:145.8px;height:30.3px;border-radius:15.2px;background:#fdeeec"></div>
<svg style="position:absolute;left:1167.3px;top:949.7px" width="19" height="19" viewBox="0 0 19 19"><g fill="#e8482f"><path d="M1.3 13.1 L12.9 1.5 L16.7 5.3 L5.1 16.9 Z"/><rect x="0.4" y="1.6" width="1.5" height="1.5"/><rect x="3.2" y="0.8" width="1.7" height="1.7"/><rect x="6.4" y="0" width="1.4" height="1.4"/><rect x="16.2" y="8.4" width="1.4" height="1.4"/></g><path d="M12.6 5.4 L14.2 3.8" stroke="#fdeeec" stroke-width="1.3" stroke-linecap="round"/></svg>
<div style="position:absolute;left:623px;top:993.6px;width:1430px;height:1.2px;background:#e1e3e3"></div>
<div style="position:absolute;left:638.3px;top:1012.5px;width:69px;height:69px;box-sizing:border-box;border:1.8px solid #d2d4d4;border-radius:6px"></div>
<svg style="position:absolute;left:657.8px;top:1034.3px" width="30" height="25" viewBox="0 0 30 25"><g fill="#8fa09d"><rect x="0" y="0" width="5.3" height="5.3" rx="1"/><rect x="0" y="9.3" width="5.3" height="5.3" rx="1"/><rect x="0" y="18.8" width="5.3" height="5.3" rx="1"/><rect x="7.6" y="0.6" width="22.3" height="4.1" rx="1.5"/><rect x="7.6" y="9.9" width="22.3" height="4.1" rx="1.5"/><rect x="7.6" y="19.4" width="22.3" height="4.1" rx="1.5"/></g></svg>
<div style="position:absolute;left:1016.8px;top:1051.0px;width:124.5px;height:30.6px;border-radius:15.3px;background:#fff8e6"></div>
<div style="position:absolute;left:1027.7px;top:1060.2px;width:12px;height:12px;border-radius:50%;background:#f3a846"></div>
<div style="position:absolute;left:623px;top:1101.1px;width:1430px;height:1.2px;background:#e1e3e3"></div>
<div style="position:absolute;left:638.3px;top:1120.0px;width:69px;height:69px;box-sizing:border-box;border:1.8px solid #d2d4d4;border-radius:6px"></div>
<svg style="position:absolute;left:657.8px;top:1141.8px" width="30" height="25" viewBox="0 0 30 25"><g fill="#8fa09d"><rect x="0" y="0" width="5.3" height="5.3" rx="1"/><rect x="0" y="9.3" width="5.3" height="5.3" rx="1"/><rect x="0" y="18.8" width="5.3" height="5.3" rx="1"/><rect x="7.6" y="0.6" width="22.3" height="4.1" rx="1.5"/><rect x="7.6" y="9.9" width="22.3" height="4.1" rx="1.5"/><rect x="7.6" y="19.4" width="22.3" height="4.1" rx="1.5"/></g></svg>
<svg style="position:absolute;left:973.4px;top:1123.5px" width="20" height="20" viewBox="0 0 20 20"><circle cx="10" cy="10" r="9.6" fill="#5d6b6b"/><g fill="#fff"><circle cx="10.3" cy="5.6" r="1.7"/><path d="M7.6 8.4 H11.6 V13.6 H12.8 V15.4 H7.6 V13.6 H8.8 V10.2 H7.6 Z"/></g></svg>
<div style="position:absolute;left:1016.8px;top:1158.5px;width:124.5px;height:30.6px;border-radius:15.3px;background:#fff8e6"></div>
<div style="position:absolute;left:1027.7px;top:1167.7px;width:12px;height:12px;border-radius:50%;background:#f3a846"></div>
<div style="position:absolute;left:1153.3px;top:1158.5px;width:145.8px;height:30.3px;border-radius:15.2px;background:#fdeeec"></div>
<svg style="position:absolute;left:1167.3px;top:1164.7px" width="19" height="19" viewBox="0 0 19 19"><g fill="#e8482f"><path d="M1.3 13.1 L12.9 1.5 L16.7 5.3 L5.1 16.9 Z"/><rect x="0.4" y="1.6" width="1.5" height="1.5"/><rect x="3.2" y="0.8" width="1.7" height="1.7"/><rect x="6.4" y="0" width="1.4" height="1.4"/><rect x="16.2" y="8.4" width="1.4" height="1.4"/></g><path d="M12.6 5.4 L14.2 3.8" stroke="#fdeeec" stroke-width="1.3" stroke-linecap="round"/></svg>
<div style="position:absolute;left:623px;top:1208.6px;width:1430px;height:1.2px;background:#e1e3e3"></div>
<div style="position:absolute;left:638.3px;top:1227.5px;width:69px;height:69px;box-sizing:border-box;border:1.8px solid #d2d4d4;border-radius:6px"></div>
<svg style="position:absolute;left:657.8px;top:1249.3px" width="30" height="25" viewBox="0 0 30 25"><g fill="#8fa09d"><rect x="0" y="0" width="5.3" height="5.3" rx="1"/><rect x="0" y="9.3" width="5.3" height="5.3" rx="1"/><rect x="0" y="18.8" width="5.3" height="5.3" rx="1"/><rect x="7.6" y="0.6" width="22.3" height="4.1" rx="1.5"/><rect x="7.6" y="9.9" width="22.3" height="4.1" rx="1.5"/><rect x="7.6" y="19.4" width="22.3" height="4.1" rx="1.5"/></g></svg>
<div style="position:absolute;left:623px;top:1208.6px;width:1430px;height:1.2px;background:#e1e3e3"></div>
<svg style="position:absolute;left:1983.3px;top:393.2px" width="20.6" height="19.6" viewBox="0 0 21 20"><g fill="#2a7683"><circle cx="4.3" cy="2.7" r="2.6"/><circle cx="16.6" cy="2.7" r="2.6"/><path d="M0.2 10.2 Q-0.2 6.4 2.6 6 L6.4 6.4 L6.8 10.6 Q3 11.4 0.2 10.2 Z"/><path d="M20.8 10.2 Q21.2 6.4 18.4 6 L14.6 6.4 L14.2 10.6 Q18 11.4 20.8 10.2 Z"/><path d="M2.9 17.2 V14.4 Q2.9 10.9 6.6 10.9 H14.2 Q17.9 10.9 17.9 14.4 V17.2 Q17.9 19 16.1 19 H4.7 Q2.9 19 2.9 17.2 Z" stroke="#f6f6f6" stroke-width="1.1"/><circle cx="10.4" cy="6.7" r="3.7" stroke="#f6f6f6" stroke-width="1.1"/></g></svg>
<div style="position:absolute;left:2023.7px;top:392.3px;width:5.8px;height:5.8px;border-radius:50%;background:#2a7683"></div>
<div style="position:absolute;left:2023.7px;top:399.9px;width:5.8px;height:5.8px;border-radius:50%;background:#2a7683"></div>
<div style="position:absolute;left:2023.7px;top:407.5px;width:5.8px;height:5.8px;border-radius:50%;background:#2a7683"></div>
<div style="position:absolute;left:1729.2px;top:420.8px;width:310.2px;height:482.8px;background:#fff;border-radius:6px;box-shadow:0 3px 10px rgba(0,0,0,0.13), 0 0 2px rgba(0,0,0,0.06)"></div>
<svg style="position:absolute;left:2013px;top:539px" width="11" height="14" viewBox="0 0 11 14"><path d="M2 1 L8.5 7 L2 13" fill="none" stroke="#8a8a8a" stroke-width="1.6"/></svg>
<div id="t14755433af" class="t" style="left:1634.1px;top:26.08px;font-size:22.00px;line-height:22.00px;color:#ffffff;font-weight:400;font-style:normal;transform:scaleX(0.9313);">Crawford Cho...</div>
<div id="tffc2fa7721" class="t" style="left:1877.0px;top:26.08px;font-size:22.00px;line-height:22.00px;color:#ffffff;font-weight:400;font-style:normal;transform:scaleX(1.0261);">VM</div>
<div id="t3d00afc928" class="t" style="left:202.2px;top:95.10px;font-size:43.00px;line-height:43.00px;color:#475556;font-weight:400;font-style:normal;transform:scaleX(0.9666);">Automation Lists</div>
<div id="tb325a194cb" class="t" style="left:149.0px;top:200.92px;font-size:21.00px;line-height:21.00px;color:#2a7889;font-weight:400;font-style:normal;transform:scaleX(0.9678);">Create Folder</div>
<div id="ta89004376b" class="t" style="left:177.4px;top:255.22px;font-size:21.00px;line-height:21.00px;color:#38a4c3;font-weight:400;font-style:normal;transform:scaleX(0.9520);">All Folders (13)</div>
<div id="te45b424e9a" class="t" style="left:176.6px;top:309.52px;font-size:21.00px;line-height:21.00px;color:#484848;font-weight:400;font-style:normal;transform:scaleX(0.9607);">Miscellaneous (10)</div>
<div id="t05e366a47f" class="t" style="left:176.7px;top:364.22px;font-size:21.00px;line-height:21.00px;color:#484848;font-weight:400;font-style:normal;transform:scaleX(0.9367);">Engagement Lists (3)</div>
<div id="t6d90de4900" class="t" style="left:639.7px;top:201.82px;font-size:21.00px;line-height:21.00px;color:#333333;font-weight:400;font-style:normal;transform:scaleX(0.9678);">Active Lists</div>
<div id="tf05e3081cc" class="t" style="left:898.7px;top:201.82px;font-size:21.00px;line-height:21.00px;color:#333333;font-weight:400;font-style:normal;transform:scaleX(1.0409);">All</div>
<div id="t09b2749fd9" class="t" style="left:646.0px;top:265.02px;font-size:21.00px;line-height:21.00px;color:#ffffff;font-weight:400;font-style:normal;transform:scaleX(0.9731);">Create List</div>
<div id="t1b1df61f8c" class="t" style="left:1161.0px;top:197.55px;font-size:21.80px;line-height:21.80px;color:#666666;font-weight:400;font-style:normal;transform:scaleX(0.9520);">Start Date</div>
<div id="t246a70fd31" class="t" style="left:1305.6px;top:197.15px;font-size:21.80px;line-height:21.80px;color:#666666;font-weight:400;font-style:normal;">-</div>
<div id="t540597e318" class="t" style="left:1329.1px;top:197.55px;font-size:21.80px;line-height:21.80px;color:#666666;font-weight:400;font-style:normal;transform:scaleX(0.9247);">End Date</div>
<div id="tf681b39bda" class="t" style="left:1711.7px;top:197.72px;font-size:21.00px;line-height:21.00px;color:#b9b9b9;font-weight:400;font-style:normal;transform:scaleX(0.9038);">Search...</div>
<div id="tcbf5892516" class="t" style="left:731.5px;top:373.62px;font-size:21.00px;line-height:21.00px;color:#414d4d;font-weight:700;font-style:normal;transform:scaleX(0.9280);">autolist</div>
<div id="t6d55d0b5eb" class="t" style="left:731.3px;top:414.20px;font-size:17.60px;line-height:17.60px;color:#888888;font-weight:400;font-style:italic;transform:scaleX(0.9642);">Last Updated: 2025-11-04 09:33 AM</div>
<div id="t5d8d9eadd3" class="t" style="left:1064.6px;top:412.56px;font-size:18.00px;line-height:18.00px;color:#6a9e3a;font-weight:400;font-style:italic;transform:scaleX(0.8990);">Member Count: 1</div>
<div id="taea0590257" class="t" style="left:1260.7px;top:412.56px;font-size:18.00px;line-height:18.00px;color:#e5492f;font-weight:400;font-style:italic;transform:scaleX(0.8467);">Rules-based</div>
<div id="t2b1a6f9a38" class="t" style="left:730.6px;top:481.12px;font-size:21.00px;line-height:21.00px;color:#414d4d;font-weight:700;font-style:normal;transform:scaleX(0.8982);">Bake Sale Customers</div>
<div id="t5375399ef9" class="t" style="left:731.3px;top:521.70px;font-size:17.60px;line-height:17.60px;color:#888888;font-weight:400;font-style:italic;transform:scaleX(0.9597);">Last Updated: 2022-09-29 10:59 PM</div>
<div id="tbbbf1716d9" class="t" style="left:1064.6px;top:520.06px;font-size:18.00px;line-height:18.00px;color:#6a9e3a;font-weight:400;font-style:italic;transform:scaleX(0.8990);">Member Count: 1</div>
<div id="t4e51a76d11" class="t" style="left:730.6px;top:588.62px;font-size:21.00px;line-height:21.00px;color:#414d4d;font-weight:700;font-style:normal;transform:scaleX(0.9341);">Bulk_Send_From_Contact_Manager_1624305373_60d0eedd7d182</div>
<div id="t6e4b494afb" class="t" style="left:731.3px;top:629.20px;font-size:17.60px;line-height:17.60px;color:#888888;font-weight:400;font-style:italic;transform:scaleX(0.9597);">Last Updated: 2021-10-27 10:56 AM</div>
<div id="t056fdb4e3e" class="t" style="left:1054.0px;top:627.56px;font-size:18.00px;line-height:18.00px;color:#f0a23a;font-weight:400;font-style:italic;transform:scaleX(0.8904);">Empty List</div>
<div id="tf5b4ea5e19" class="t" style="left:730.6px;top:696.12px;font-size:21.00px;line-height:21.00px;color:#414d4d;font-weight:700;font-style:normal;transform:scaleX(0.9388);">Bulk_Send_From_Contact_Manager_1624305410_60d0ef02b4517</div>
<div id="t5e7dc8ac53" class="t" style="left:731.3px;top:736.70px;font-size:17.60px;line-height:17.60px;color:#888888;font-weight:400;font-style:italic;transform:scaleX(0.9597);">Last Updated: 2021-10-27 10:56 AM</div>
<div id="t064bb75dcd" class="t" style="left:1054.0px;top:735.06px;font-size:18.00px;line-height:18.00px;color:#f0a23a;font-weight:400;font-style:italic;transform:scaleX(0.8904);">Empty List</div>
<div id="teaaa81dcc6" class="t" style="left:731.5px;top:803.62px;font-size:21.00px;line-height:21.00px;color:#414d4d;font-weight:700;font-style:normal;transform:scaleX(0.9346);">Confirmed Opt In</div>
<div id="t7080b8e87a" class="t" style="left:731.3px;top:844.20px;font-size:17.60px;line-height:17.60px;color:#888888;font-weight:400;font-style:italic;transform:scaleX(0.9597);">Last Updated: 2025-10-30 01:00 PM</div>
<div id="t6820d8196d" class="t" style="left:1054.0px;top:842.56px;font-size:18.00px;line-height:18.00px;color:#f0a23a;font-weight:400;font-style:italic;transform:scaleX(0.8904);">Empty List</div>
<div id="t4bda23fde9" class="t" style="left:1201.0px;top:842.56px;font-size:18.00px;line-height:18.00px;color:#e5492f;font-weight:400;font-style:italic;transform:scaleX(0.8467);">Rules-based</div>
<div id="t383a7fbd5f" class="t" style="left:731.5px;top:911.12px;font-size:21.00px;line-height:21.00px;color:#414d4d;font-weight:700;font-style:normal;transform:scaleX(0.9081);">Contacts with Low Engagement</div>
<div id="t1c6f16e0a6" class="t" style="left:731.3px;top:951.70px;font-size:17.60px;line-height:17.60px;color:#888888;font-weight:400;font-style:italic;transform:scaleX(0.9642);">Last Updated: 2025-03-11 10:30 PM</div>
<div id="t973c9f08e5" class="t" style="left:1054.0px;top:950.06px;font-size:18.00px;line-height:18.00px;color:#f0a23a;font-weight:400;font-style:italic;transform:scaleX(0.8904);">Empty List</div>
<div id="t53cf318c74" class="t" style="left:1201.0px;top:950.06px;font-size:18.00px;line-height:18.00px;color:#e5492f;font-weight:400;font-style:italic;transform:scaleX(0.8467);">Rules-based</div>
<div id="tc27b06fb0a" class="t" style="left:730.6px;top:1018.62px;font-size:21.00px;line-height:21.00px;color:#414d4d;font-weight:700;font-style:normal;transform:scaleX(0.9498);">Doctor Office Vertical</div>
<div id="ta7e862f970" class="t" style="left:731.3px;top:1059.20px;font-size:17.60px;line-height:17.60px;color:#888888;font-weight:400;font-style:italic;transform:scaleX(0.9597);">Last Updated: 2025-06-05 06:30 AM</div>
<div id="t21891609e5" class="t" style="left:1054.0px;top:1057.56px;font-size:18.00px;line-height:18.00px;color:#f0a23a;font-weight:400;font-style:italic;transform:scaleX(0.8904);">Empty List</div>
<div id="t35bdcb7db7" class="t" style="left:730.6px;top:1126.12px;font-size:21.00px;line-height:21.00px;color:#414d4d;font-weight:700;font-style:normal;transform:scaleX(0.9031);">Highly Engaged Contacts</div>
<div id="tc7c3629e10" class="t" style="left:731.3px;top:1166.70px;font-size:17.60px;line-height:17.60px;color:#888888;font-weight:400;font-style:italic;transform:scaleX(0.9597);">Last Updated: 2025-08-18 04:00 PM</div>
<div id="t9b21cf87fb" class="t" style="left:1054.0px;top:1165.06px;font-size:18.00px;line-height:18.00px;color:#f0a23a;font-weight:400;font-style:italic;transform:scaleX(0.8904);">Empty List</div>
<div id="t763d67d66f" class="t" style="left:1201.0px;top:1165.06px;font-size:18.00px;line-height:18.00px;color:#e5492f;font-weight:400;font-style:italic;transform:scaleX(0.8467);">Rules-based</div>
<div id="t7747bc014b" class="t" style="left:730.6px;top:1233.62px;font-size:21.00px;line-height:21.00px;color:#414d4d;font-weight:700;font-style:normal;transform:scaleX(0.9001);">lead score</div>
<div id="t044d333ab7" class="t" style="left:1746.5px;top:440.35px;font-size:20.50px;line-height:20.50px;color:#444646;font-weight:400;font-style:normal;transform:scaleX(0.9642);">Change List Settings</div>
<div id="td661eb2fcf" class="t" style="left:1746.6px;top:486.85px;font-size:20.50px;line-height:20.50px;color:#444646;font-weight:400;font-style:normal;transform:scaleX(0.9485);">Rename List</div>
<div id="t1c55132c85" class="t" style="left:1746.5px;top:534.05px;font-size:20.50px;line-height:20.50px;color:#444646;font-weight:400;font-style:normal;transform:scaleX(0.9808);">Move to Folder...</div>
<div id="t52b2015d98" class="t" style="left:1747.5px;top:580.95px;font-size:20.50px;line-height:20.50px;color:#444646;font-weight:400;font-style:normal;transform:scaleX(0.9804);">Schedule Action Group for List</div>
<div id="tcad2d61db0" class="t" style="left:1747.5px;top:629.55px;font-size:20.50px;line-height:20.50px;color:#444646;font-weight:400;font-style:normal;transform:scaleX(1.0144);">View/Edit Members</div>
<div id="t16faa22172" class="t" style="left:1747.5px;top:676.15px;font-size:20.50px;line-height:20.50px;color:#444646;font-weight:400;font-style:normal;transform:scaleX(0.9479);">Send Email to List</div>
<div id="t4dc2cc19bd" class="t" style="left:1746.5px;top:722.85px;font-size:20.50px;line-height:20.50px;color:#444646;font-weight:400;font-style:normal;transform:scaleX(0.9618);">Create Sample List</div>
<div id="te6b2bae533" class="t" style="left:1747.5px;top:770.05px;font-size:20.50px;line-height:20.50px;color:#444646;font-weight:400;font-style:normal;transform:scaleX(0.9745);">Split List</div>
<div id="t1c25d9e7ba" class="t" style="left:1746.5px;top:816.95px;font-size:20.50px;line-height:20.50px;color:#444646;font-weight:400;font-style:normal;transform:scaleX(0.9801);">Rebuild List</div>
<div id="t8cf15199a7" class="t" style="left:1746.5px;top:864.15px;font-size:20.50px;line-height:20.50px;color:#444646;font-weight:400;font-style:normal;transform:scaleX(1.0041);">Deactivate List</div>
<div style="position:absolute;left:4.4px;top:342px;width:87.3px;height:65.8px;box-sizing:border-box;border:6px solid #fe8e53;border-radius:13px"></div>
<div style="position:absolute;left:2008px;top:375.9px;width:39.7px;height:45.9px;box-sizing:border-box;border:5.9px solid #fe8e53;border-radius:9px"></div>
<div style="position:absolute;left:1727.8px;top:471.9px;width:313.6px;height:48px;box-sizing:border-box;border:5.4px solid #fe8e53;border-radius:15px"></div>
<div style="position:absolute;left:106.3px;top:370px;width:8.6px;height:10px;background:#fe8e53"></div>
<div style="position:absolute;left:124.7px;top:370px;width:10.3px;height:10px;background:#fe8e53"></div>
<div style="position:absolute;left:144.9px;top:370px;width:6.0px;height:10px;background:#fe8e53"></div>
<div style="position:absolute;left:68.7px;top:356.6px;width:38px;height:38px;box-sizing:border-box;border:5.6px solid #fe8e53;border-radius:50%;background:#fff"></div>
<div style="position:absolute;left:148.3px;top:334.8px;width:81px;height:81px;box-sizing:border-box;border:6px solid #fe8e53;border-radius:50%;background:#fff2e2"></div>
<div style="position:absolute;left:1670.0px;top:492.3px;width:2.0px;height:9.5px;background:#fe8e53"></div>
<div style="position:absolute;left:1682.0px;top:492.3px;width:10.7px;height:9.5px;background:#fe8e53"></div>
<div style="position:absolute;left:1702.0px;top:492.3px;width:10.0px;height:9.5px;background:#fe8e53"></div>
<div style="position:absolute;left:1709.2px;top:482.2px;width:31px;height:31px;box-sizing:border-box;border:5px solid #fe8e53;border-radius:50%;background:#fff"></div>
<div style="position:absolute;left:1591px;top:456.8px;width:79.5px;height:79.5px;box-sizing:border-box;border:6px solid #fe8e53;border-radius:50%;background:#fff2e2"></div>

<svg style="position:absolute;left:0;top:0" width="2098" height="1262" viewBox="0 0 2098 1262">
<path d="M187.3 358.7 H193.4 V393.6 H187.3 V367.2 L181.3 370.7 L178.8 365.4 Z" fill="#0a0a0a"/>
<path d="M1623.4 488.8 Q1625.6 483.7 1631.3 483.7 Q1639.3 483.7 1639.3 491.4 Q1639.3 495.8 1634.6 500.8 L1623.6 512.3 H1642.4" fill="none" stroke="#0a0a0a" stroke-width="6" stroke-linejoin="miter"/>
</svg>
<div id="frame"></div>
</body></html>
